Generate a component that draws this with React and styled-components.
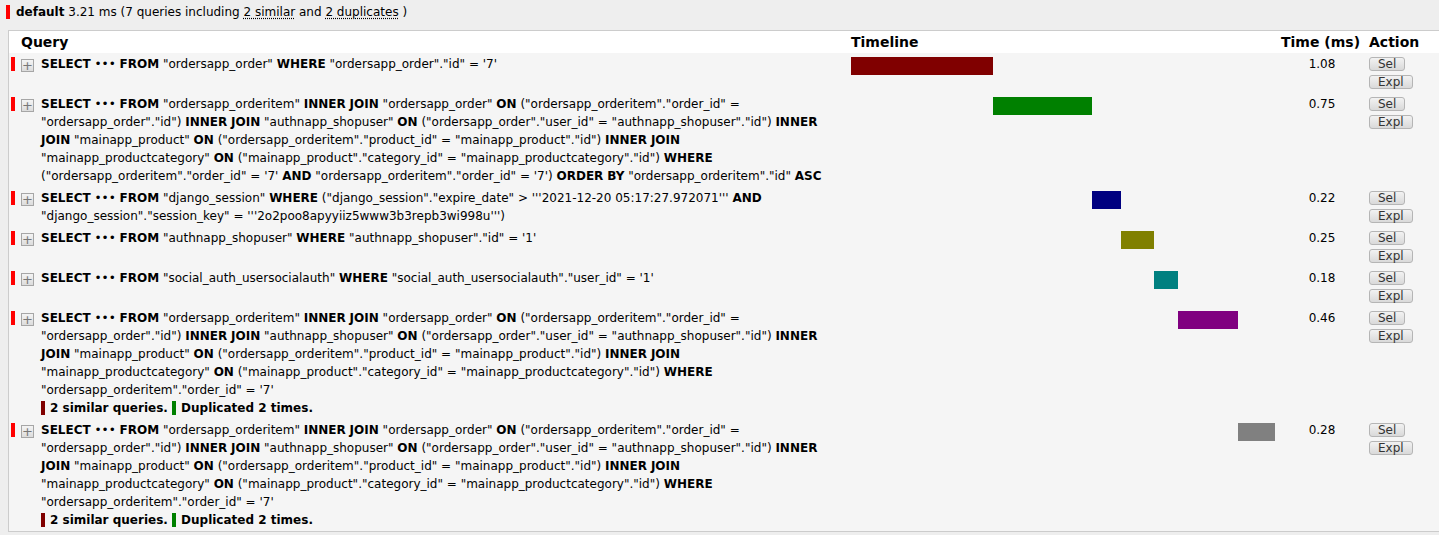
import React from 'react';
import styled, { createGlobalStyle } from 'styled-components';

const GlobalStyle = createGlobalStyle`
  html, body {
    margin: 0;
    padding: 0;
    background: #eeeeee;
    overflow: hidden;
  }
  body {
    font-family: "DejaVu Sans", Verdana, sans-serif;
    font-size: 12px;
    line-height: 18px;
    color: #000;
  }
`;

const Summary = styled.h4`
  margin: 0 0 9px 0;
  padding: 3px 0 0 6px;
  font-size: 12px;
  line-height: 18px;
  font-weight: normal;
  color: #000;

  b {
    font-weight: bold;
  }
`;

const SummaryMark = styled.span`
  border-left: 4px solid #ff0000;
  padding-left: 6px;
`;

const Abbr = styled.abbr`
  text-decoration: underline dotted;
  text-underline-offset: 2px;
  cursor: help;
`;

const Table = styled.table`
  margin-left: 8px;
  width: 1448px;
  table-layout: fixed;
  border-collapse: separate;
  border-spacing: 0;
  border: 1px solid #cccccc;
  border-right: none;
  background: #f5f5f5;
`;

const HeadCell = styled.th`
  box-sizing: border-box;
  background: #ffffff;
  padding: 2px 3px;
  font-size: 14px;
  line-height: 18px;
  font-weight: bold;
  text-align: left;
  color: #000;
`;

const Cell = styled.td`
  box-sizing: border-box;
  padding: 2px 3px;
  vertical-align: top;
  text-align: ${(p) => (p.$center ? 'center' : 'left')};
`;

const ColorCell = styled.td`
  box-sizing: border-box;
  padding: 2px 0 2px 2px;
  vertical-align: top;
`;

const ColorMark = styled.span`
  display: block;
  width: 0;
  height: 14px;
  margin-top: 2px;
  border-left: 4px solid ${(p) => p.$color};
`;

const Toggle = styled.span`
  display: block;
  width: 11px;
  height: 11px;
  margin-top: 4px;
  border: 1px solid #a6a6a6;
  background: linear-gradient(#f4f4f4, #dcdcdc);
  color: #777;
  font-size: 13px;
  line-height: 11px;
  text-align: center;
  cursor: pointer;
`;

const Sql = styled.div`
  color: #000;
  word-wrap: break-word;

  strong {
    font-weight: bold;
  }
`;

const Note = styled.div`
  font-weight: bold;
`;

const NoteTag = styled.span`
  border-left: 4px solid ${(p) => p.$color};
  padding-left: 5px;
`;

const Bar = styled.div`
  height: 18px;
  margin-top: 2px;
  background: ${(p) => p.$color};
`;

const Actions = styled.div`
  display: flex;
  flex-direction: column;
  align-items: flex-start;
  gap: 4px;
  padding: 2px 0;
`;

const Button = styled.button`
  display: block;
  margin: 0;
  padding: 0 8px;
  height: 14px;
  font-family: "DejaVu Sans", Verdana, sans-serif;
  font-size: 12px;
  line-height: 12px;
  color: #333;
  background: linear-gradient(#f2f2f2, #d9d9d9);
  border: 1px solid #b5b5b5;
  border-radius: 3px;
  cursor: pointer;
`;

const KEYWORDS = /\b(SELECT|FROM|WHERE|INNER|JOIN|ON|AND|ORDER|BY|ASC)\b/;

const renderSql = (sql) =>
  sql.split(KEYWORDS).map((part, i) =>
    i % 2 === 1 ? <strong key={i}>{part}</strong> : <React.Fragment key={i}>{part}</React.Fragment>
  );

const JOINS =
  'SELECT ••• FROM "ordersapp_orderitem" INNER JOIN "ordersapp_order" ON ("ordersapp_orderitem"."order_id" = "ordersapp_order"."id") INNER JOIN "authnapp_shopuser" ON ("ordersapp_order"."user_id" = "authnapp_shopuser"."id") INNER JOIN "mainapp_product" ON ("ordersapp_orderitem"."product_id" = "mainapp_product"."id") INNER JOIN "mainapp_productcategory" ON ("mainapp_product"."category_id" = "mainapp_productcategory"."id") WHERE ';

const TOTAL = 3.22;

const queries = [
  {
    sql: 'SELECT ••• FROM "ordersapp_order" WHERE "ordersapp_order"."id" = \'7\'',
    time: 1.08,
    color: '#800000',
  },
  {
    sql: JOINS + '("ordersapp_orderitem"."order_id" = \'7\' AND "ordersapp_orderitem"."order_id" = \'7\') ORDER BY "ordersapp_orderitem"."id" ASC',
    time: 0.75,
    color: '#008000',
  },
  {
    sql: 'SELECT ••• FROM "django_session" WHERE ("django_session"."expire_date" > \'\'\'2021-12-20 05:17:27.972071\'\'\' AND "django_session"."session_key" = \'\'\'2o2poo8apyyiiz5www3b3repb3wi998u\'\'\')',
    time: 0.22,
    color: '#000080',
  },
  {
    sql: 'SELECT ••• FROM "authnapp_shopuser" WHERE "authnapp_shopuser"."id" = \'1\'',
    time: 0.25,
    color: '#808000',
  },
  {
    sql: 'SELECT ••• FROM "social_auth_usersocialauth" WHERE "social_auth_usersocialauth"."user_id" = \'1\'',
    time: 0.18,
    color: '#008080',
  },
  {
    sql: JOINS + '"ordersapp_orderitem"."order_id" = \'7\'',
    time: 0.46,
    color: '#800080',
    similar: true,
  },
  {
    sql: JOINS + '"ordersapp_orderitem"."order_id" = \'7\'',
    time: 0.28,
    color: '#808080',
    similar: true,
  },
];

const App = () => {
  let offset = 0;
  return (
    <>
      <GlobalStyle />
      <Summary>
        <SummaryMark>
          <b>default</b> 3.21 ms (7 queries including <Abbr title="Similar queries">2 similar</Abbr> and{' '}
          <Abbr title="Duplicate queries">2 duplicates</Abbr> )
        </SummaryMark>
      </Summary>
      <Table>
        <colgroup>
          <col style={{ width: 9 }} />
          <col style={{ width: 20 }} />
          <col style={{ width: 810 }} />
          <col style={{ width: 430 }} />
          <col style={{ width: 88 }} />
          <col />
        </colgroup>
        <thead>
          <tr>
            <HeadCell />
            <HeadCell colSpan={2}>Query</HeadCell>
            <HeadCell>Timeline</HeadCell>
            <HeadCell>Time (ms)</HeadCell>
            <HeadCell>Action</HeadCell>
          </tr>
        </thead>
        <tbody>
          {queries.map((q, i) => {
            const left = (offset / TOTAL) * 100;
            const width = (q.time / TOTAL) * 100;
            offset += q.time;
            return (
              <tr key={i}>
                <ColorCell>
                  <ColorMark $color="#ff0000" />
                </ColorCell>
                <Cell>
                  <Toggle>+</Toggle>
                </Cell>
                <Cell>
                  <Sql>{renderSql(q.sql)}</Sql>
                  {q.similar && (
                    <Note>
                      <NoteTag $color="#800000">2 similar queries.</NoteTag>{' '}
                      <NoteTag $color="#008000">Duplicated 2 times.</NoteTag>
                    </Note>
                  )}
                </Cell>
                <Cell>
                  <Bar $color={q.color} style={{ marginLeft: `${left}%`, width: `${width}%` }} />
                </Cell>
                <Cell $center>{q.time.toFixed(2)}</Cell>
                <Cell>
                  <Actions>
                    <Button>Sel</Button>
                    <Button>Expl</Button>
                  </Actions>
                </Cell>
              </tr>
            );
          })}
        </tbody>
      </Table>
    </>
  );
};

export default App;
